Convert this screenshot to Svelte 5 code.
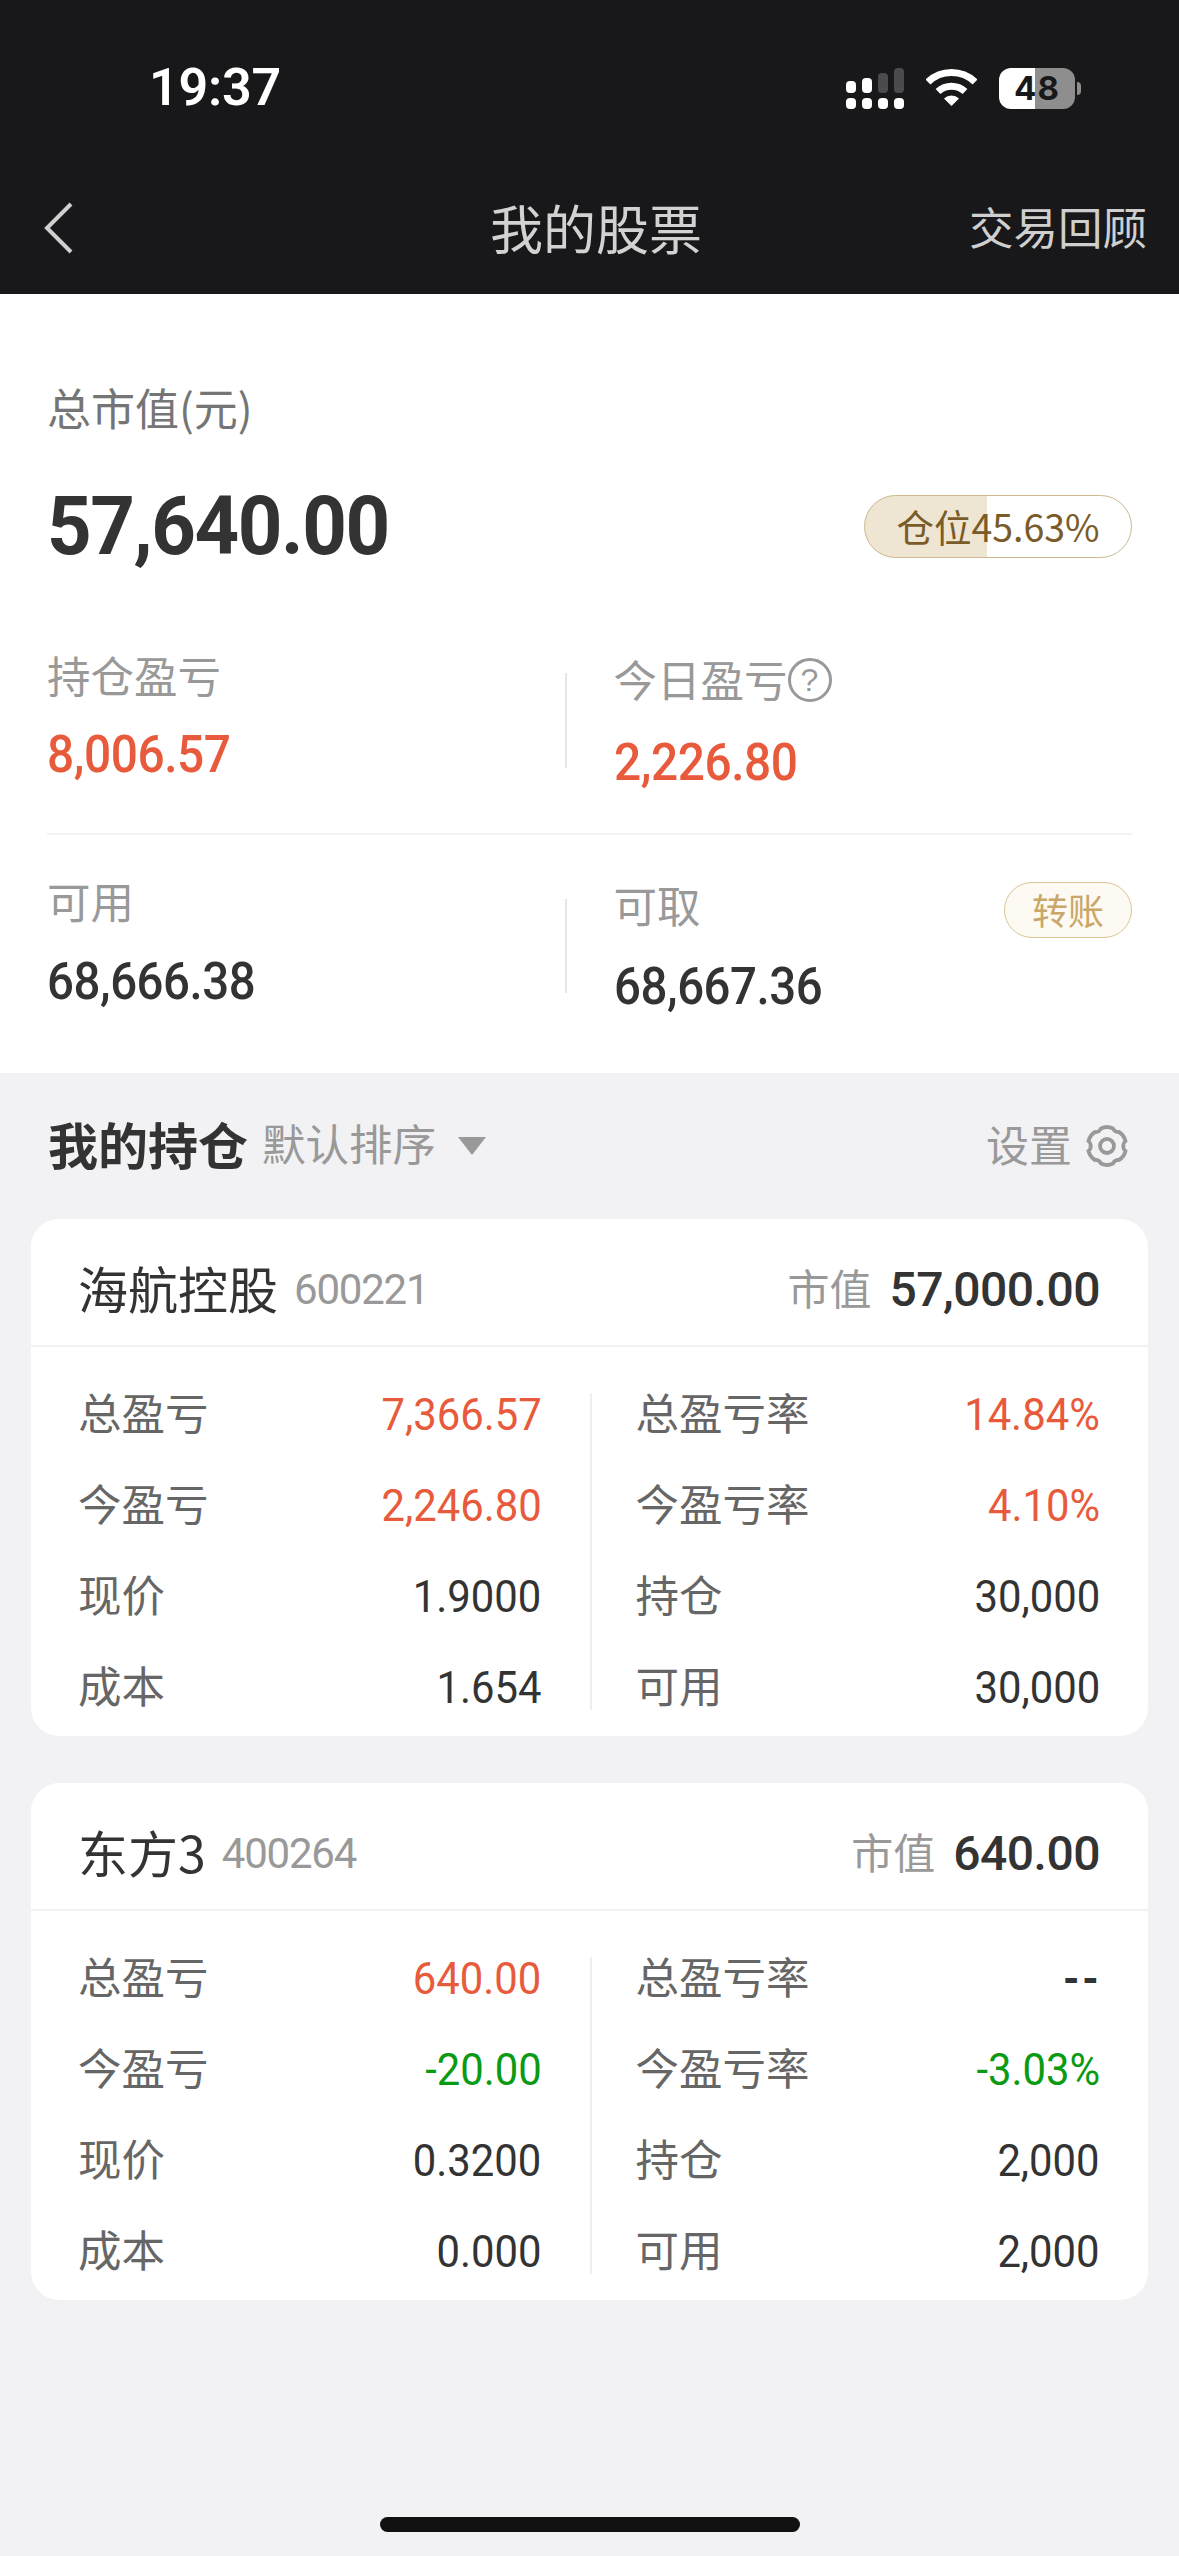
<script>
  const cards = [
    {
      name: '海航控股', code: '600221', mv: '57,000.00',
      left: [['总盈亏','7,366.57','up'],['今盈亏','2,246.80','up'],['现价','1.9000',''],['成本','1.654','']],
      right: [['总盈亏率','14.84%','up'],['今盈亏率','4.10%','up'],['持仓','30,000',''],['可用','30,000','']]
    },
    {
      name: '东方3', code: '400264', mv: '640.00',
      left: [['总盈亏','640.00','up'],['今盈亏','-20.00','down'],['现价','0.3200',''],['成本','0.000','']],
      right: [['总盈亏率','--','dash'],['今盈亏率','-3.03%','down'],['持仓','2,000',''],['可用','2,000','']]
    }
  ];
  const bars = [[0,13,12],[16,10,15],[32,5,20],[48,0,25]];
</script>

<div class="page">
  <header class="top">
    <div class="status">
      <span class="time">19:37</span>
      <div class="sys">
        <svg class="signal" width="58" height="41" viewBox="0 0 58 41">
          {#each bars as b, i}
            <rect x={b[0]} y={b[1]} width="10" height={b[2]} rx="4" fill={i < 2 ? '#fff' : '#4b4b4d'} />
            <rect x={b[0]} y="30" width="10" height="11" rx="4" fill="#fff" />
          {/each}
        </svg>
        <svg class="wifi" width="51" height="38" viewBox="0 0 51 38">
          <path d="M2 13 A34 34 0 0 1 49 13" fill="none" stroke="#fff" stroke-width="7" />
          <path d="M12 22.5 A20 20 0 0 1 39 22.5" fill="none" stroke="#fff" stroke-width="7" />
          <path d="M25.500 37 L18 29.500 A11 11 0 0 1 33 29.500 Z" fill="#fff" />
        </svg>
        <div class="battery"><span>48</span></div>
        <i class="cap"></i>
      </div>
    </div>
    <nav class="nav">
      <svg class="back" width="30" height="52" viewBox="0 0 30 52">
        <path d="M27 2 L3 26 L27 50" fill="none" stroke="#cfcfcf" stroke-width="4" />
      </svg>
      <span class="title">我的股票</span>
      <span class="review">交易回顾</span>
    </nav>
  </header>

  <section class="summary">
    <div class="total-label">总市值(元)</div>
    <div class="total-row">
      <span class="total num">57,640.00</span>
      <span class="pill">仓位45.63%</span>
    </div>
    <div class="stats first">
      <div class="stat">
        <div class="lab">持仓盈亏</div>
        <div class="val num up v1">8,006.57</div>
      </div>
      <i class="vr v-a"></i>
      <div class="stat right">
        <div class="lab">今日盈亏<span class="help">?</span></div>
        <div class="val num up v2">2,226.80</div>
      </div>
    </div>
    <div class="stats second">
      <div class="stat">
        <div class="lab">可用</div>
        <div class="val num v3">68,666.38</div>
      </div>
      <i class="vr v-b"></i>
      <div class="stat right">
        <div class="lab-row">
          <div class="lab">可取</div>
          <span class="transfer">转账</span>
        </div>
        <div class="val num v3 v4">68,667.36</div>
      </div>
    </div>
  </section>

  <div class="hold-head">
    <span class="hold-title">我的持仓</span>
    <span class="sort">默认排序</span>
    <i class="tri"></i>
    <span class="setting">设置</span>
    <svg class="gear" width="42" height="42" viewBox="0 0 42 42" fill="none" stroke="#999" stroke-width="3.800">
      <path d="M15 3.500 Q21 0.500 27 3.500 Q29 7.500 33 7 Q38 10 39.500 16 Q36.500 19 37.500 21 Q36.500 23 39.500 26 Q38 32 33 35 Q29 34.500 27 38.500 Q21 41.500 15 38.500 Q13 34.500 9 35 Q4 32 2.500 26 Q5.500 23 4.500 21 Q5.500 19 2.500 16 Q4 10 9 7 Q13 7.500 15 3.500 Z" />
      <circle cx="21" cy="21" r="7" />
    </svg>
  </div>

  <div class="cards">
    {#each cards as c}
      <article class="card">
        <div class="card-head">
          <span class="name">{c.name}</span>
          <span class="code num">{c.code}</span>
          <span class="mv-lab">市值</span>
          <span class="mv num">{c.mv}</span>
        </div>
        <div class="card-body">
          <div class="col">
            {#each c.left as r}
              <div class="row"><span class="r-lab">{r[0]}</span><span class="r-val num {r[2]}">{r[1]}</span></div>
            {/each}
          </div>
          <i class="col-div"></i>
          <div class="col">
            {#each c.right as r}
              <div class="row"><span class="r-lab">{r[0]}</span><span class="r-val num {r[2]}">{r[1]}</span></div>
            {/each}
          </div>
        </div>
      </article>
    {/each}
  </div>
  <div class="home"></div>
</div>

<style>
  :global(body) { margin: 0; background: #f2f2f4; }
  .page {
    position: relative;
    width: 1179px;
    height: 2556px;
    overflow: hidden;
    background: #f2f2f4;
    font-family: "Noto Sans CJK SC", "Noto Sans", sans-serif;
    color: #333;
  }
  i { display: block; font-style: normal; }
  .num { font-family: Roboto, "Noto Sans CJK SC", sans-serif; }
  .up { color: #e85a3c; }
  .down { color: #0a9a14; }

  .top { height: 294px; background: #18181a; box-sizing: border-box; }
  .status { height: 176px; display: flex; align-items: center; padding: 0 98px 0 149px; box-sizing: border-box; justify-content: space-between; }
  .time { font: 600 52px/1 Roboto, sans-serif; color: #fff; letter-spacing: -0.2px; }
  .sys { display: flex; align-items: center; }
  .signal { display: block; margin-right: 22px; }
  .wifi { display: block; margin-right: 22px; }
  .battery {
    width: 76px; height: 41px; border-radius: 12px;
    background: linear-gradient(90deg, #fff 0 47%, #8e8e8e 47% 100%);
    display: flex; align-items: center; justify-content: center;
    font: 700 33px/1 Inter, Roboto, sans-serif; color: #18181a; letter-spacing: 1px;
  }
  .cap { width: 4px; height: 13px; margin-left: 2px; background: #8e8e8e; border-radius: 0 6px 6px 0; }

  .nav { height: 104px; display: flex; align-items: center; position: relative; }
  .back { position: absolute; left: 44px; top: 26px; }
  .title { position: absolute; left: 490px; top: 18px; font-size: 53px; line-height: 66px; color: #d2d2d2; }
  .review { position: absolute; right: 32px; top: 22px; font-size: 44.500px; line-height: 56px; color: #cfcfcf; }

  .summary { height: 779px; background: #fff; padding: 90px 47px 0; box-sizing: border-box; }
  .total-label { height: 54px; line-height: 46px; font-size: 44px; color: #757575; }
  .total-row { margin-top: 48px; height: 80px; display: flex; align-items: center; justify-content: space-between; }
  .total { font-size: 82px; line-height: 80px; font-weight: 700; color: #333; letter-spacing: -1.5px; transform: scaleX(.95); transform-origin: left center; }
  .pill {
    width: 268px; height: 63px; box-sizing: border-box;
    border: 1.500px solid #cdb88f; border-radius: 32px;
    background: linear-gradient(90deg, #efe5d3 0 122px, #fff 122px 100%);
    font-size: 37.500px; line-height: 60px; text-align: center; color: #7a5c2a;
  }
  .stats { display: flex; }
  .first { margin-top: 84px; height: 183px; border-bottom: 2px solid #f2f2f2; }
  .second { height: 200px; }
  .stat { width: 518px; box-sizing: border-box; }
  .stat.right { flex: 1; padding-left: 47px; }
  .first .stat.right { padding-top: 4px; }
  .second .stat { padding-top: 41px; }
  .second .stat.right { padding-top: 45px; }
  .vr { width: 1.500px; background: #e6e6e6; flex: none; }
  .v-a { margin-top: 23px; height: 95px; }
  .v-b { margin-top: 64px; height: 94px; }
  .lab { font-size: 43.500px; line-height: 50px; height: 56px; color: #999; display: flex; align-items: flex-start; }
  .help {
    width: 44px; height: 44px; margin-top: 4px; border: 3px solid #999; border-radius: 50%; box-sizing: border-box;
    font: 400 32px/38px "Liberation Sans", sans-serif; text-align: center; color: #999;
  }
  .lab-row { display: flex; justify-content: space-between; align-items: flex-start; }
  .transfer {
    width: 128px; height: 56px; box-sizing: border-box; margin-top: 2px;
    background: #fdfaf3; border: 1.500px solid #d8c592; border-radius: 28px;
    font-size: 36px; line-height: 52px; text-align: center; color: #c9a768;
  }
  .val { line-height: 50px; font-weight: 500; transform-origin: left center; }
  .v1, .v2 { font-size: 52px; letter-spacing: -0.5px; transform: scaleX(.92); }
  .v1 { margin-top: 24px; }
  .v2 { margin-top: 28px; }
  .v3 { font-size: 51px; margin-top: 25px; letter-spacing: -0.5px; color: #333; transform: scaleX(.93); }
  .v4 { margin-top: 24px; }

  .hold-head { height: 146px; display: flex; align-items: center; padding: 0 51px 0 48px; }
  .hold-title { font-size: 50px; line-height: 60px; margin-top: -6px; font-weight: 700; color: #333; }
  .sort { font-size: 43.500px; line-height: 60px; margin-top: -6px; color: #999; margin-left: 14px; }
  .tri { margin-left: 22px; width: 0; height: 0; border-left: 14px solid transparent; border-right: 14px solid transparent; border-top: 18px solid #999; }
  .setting { margin-left: auto; font-size: 43px; line-height: 60px; margin-top: -6px; color: #999; }
  .gear { margin-left: 14px; display: block; }

  .cards { margin: 0 31px; display: flex; flex-direction: column; gap: 47px; }
  .card { height: 517px; background: #fff; border-radius: 28px; overflow: hidden; }
  .card-head {
    height: 126px; display: flex; align-items: center; padding: 0 48px 0 47px;
    border-bottom: 2px solid #f1f1f3;
  }
  .name { font-size: 50px; line-height: 60px; margin-top: 10px; color: #333; }
  .code { font-size: 42px; line-height: 50px; color: #999; margin: 16px 0 0 16px; letter-spacing: -1.200px; }
  .mv-lab { margin-left: auto; font-size: 42px; line-height: 50px; margin-top: 10px; color: #999; }
  .mv { margin: 16px 0 0 18px; font-size: 48px; line-height: 50px; font-weight: 500; color: #333; letter-spacing: -0.5px; }
  .card-body { display: flex; padding: 21px 48px 0 47px; }
  .col { width: 465px; }
  .col:first-child { width: 464px; }
  .col-div { width: 2px; height: 317px; margin: 25px 44px 0 48px; background: #eeeeee; }
  .row { height: 91px; display: flex; align-items: center; justify-content: space-between; }
  .r-lab { font-size: 43.500px; line-height: 50px; margin-top: -3px; color: #666; }
  .r-val { font-size: 44px; line-height: 50px; color: #333; margin-top: 3px; transform: scaleX(.95); transform-origin: right center; }
  .r-val.up { color: #e85a3c; }
  .r-val.down { color: #0a9a14; }
  .r-val.dash { font-weight: 700; letter-spacing: 3px; margin-right: -2px; }

  .home { position: absolute; left: 380px; top: 2517px; width: 420px; height: 15px; border-radius: 7.5px; background: #111; }
</style>
